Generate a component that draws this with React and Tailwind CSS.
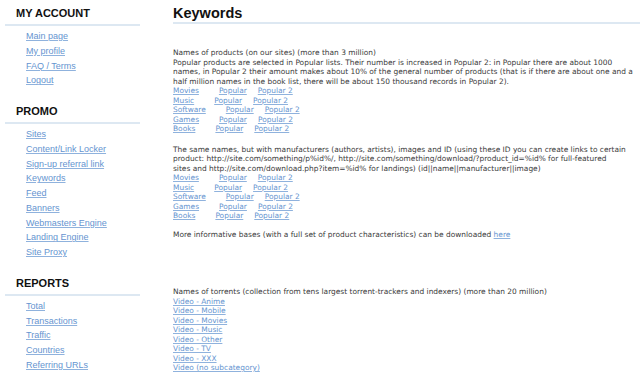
import React from "react";

const LINK = "text-[#6594d0] underline decoration-[#8fb2dd]";

function Section({ title, links, first }) {
  return (
    <div className={first ? "" : "mt-[16px]"}>
      <div className="pt-[6px] pb-[4px] pl-[11px] border-b-2 border-[#dde8f2] text-[11px] leading-[14px] font-bold text-[#111]" style={first ? {} : { paddingTop: 0 }}>
        {title}
      </div>
      <div className="mt-[3px] pl-[21px] flex flex-col">
        {links.map((l) => (
          <div key={l} className="h-[14.75px] leading-[14.75px] text-[9px]">
            <a className={LINK}>{l}</a>
          </div>
        ))}
      </div>
    </div>
  );
}

function PopRows() {
  const rows = ["Movies", "Music", "Software", "Games", "Books"];
  return rows.map((r) => (
    <div key={r} className="whitespace-nowrap">
      <a className={LINK}>{r}</a>
      <a className={LINK + " ml-[20px]"}>Popular</a>
      <a className={LINK + " ml-[11px]"}>Popular 2</a>
    </div>
  ));
}

export default function App() {
  return (
    <div className="w-[640px] h-[381px] bg-white overflow-hidden flex" style={{ fontFamily: "'Liberation Sans', Arial, sans-serif" }}>
      <div className="ml-[5px] w-[135px] shrink-0">
        <Section first title="MY ACCOUNT" links={["Main page", "My profile", "FAQ / Terms", "Logout"]} />
        <Section
          title="PROMO"
          links={["Sites", "Content/Link Locker", "Sign-up referral link", "Keywords", "Feed", "Banners", "Webmasters Engine", "Landing Engine", "Site Proxy"]}
        />
        <Section title="REPORTS" links={["Total", "Transactions", "Traffic", "Countries", "Referring URLs"]} />
      </div>
      <div className="ml-[33px] flex-1 min-w-0">
        <div className="pt-[5px] pb-[1px] border-b-2 border-[#dde8f2] text-[14.5px] leading-[16px] font-bold text-[#111]">
          Keywords
        </div>
        <div
          className="mt-[24px] text-[7.45px] leading-[9.5px] text-[#3a3a3a] whitespace-nowrap"
          style={{ fontFamily: "'DejaVu Sans', Verdana, sans-serif" }}
        >
          <div>Names of products (on our sites) (more than 3 million)</div>
          <div>Popular products are selected in Popular lists. Their number is increased in Popular 2: in Popular there are about 1000</div>
          <div>names, in Popular 2 their amount makes about 10% of the general number of products (that is if there are about one and a</div>
          <div>half million names in the book list, there will be about 150 thousand records in Popular 2).</div>
          <PopRows />
          <div className="mt-[11px]">The same names, but with manufacturers (authors, artists), images and ID (using these ID you can create links to certain</div>
          <div>product: http://site.com/something/p%id%/, http://site.com/something/download/?product_id=%id% for full-featured</div>
          <div>sites and http://site.com/download.php?item=%id% for landings) (id||name||manufacturer||image)</div>
          <PopRows />
          <div className="mt-[9px]">
            More informative bases (with a full set of product characteristics) can be downloaded <a className={LINK}>here</a>
          </div>
          <div className="mt-[48px]">Names of torrents (collection from tens largest torrent-trackers and indexers) (more than 20 million)</div>
          {["Video - Anime", "Video - Mobile", "Video - Movies", "Video - Music", "Video - Other", "Video - TV", "Video - XXX", "Video (no subcategory)"].map((v) => (
            <div key={v}>
              <a className={LINK}>{v}</a>
            </div>
          ))}
        </div>
      </div>
    </div>
  );
}
